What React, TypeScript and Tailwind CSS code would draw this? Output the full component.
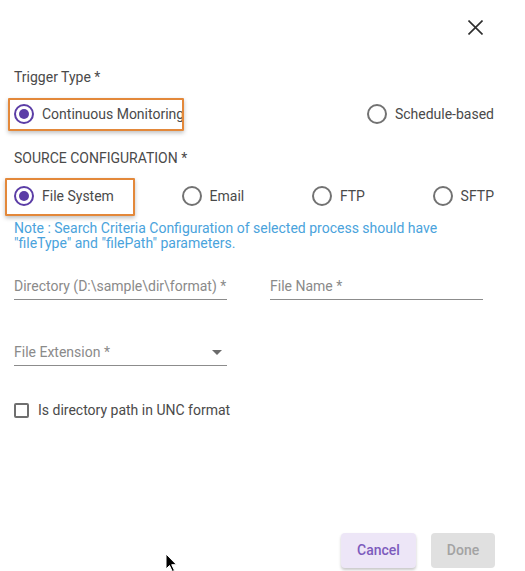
const Radio = ({ label, checked = false }: { label: string; checked?: boolean }) => (
  <label className="flex items-center gap-2 text-[14px] leading-5 text-[#4a4a4a]">
    <span
      className={`flex h-5 w-5 items-center justify-center rounded-full border-2 ${
        checked ? "border-[#5b3da6]" : "border-[#727272]"
      }`}
    >
      {checked && <span className="h-[10px] w-[10px] rounded-full bg-[#5b3da6]" />}
    </span>
    <span className="whitespace-nowrap">{label}</span>
  </label>
);

// orange annotation frame drawn on top of an option
const Highlight = ({ className }: { className: string }) => (
  <span
    className={`pointer-events-none absolute rounded-[1px] border-[2.5px] border-[#e3883a] shadow-[0_2px_4px_rgba(0,0,0,0.25)] ${className}`}
  />
);

const Field = ({ label, select = false }: { label: string; select?: boolean }) => (
  <div className="flex w-[213px] items-center justify-between border-b border-[#8c8c8c] pb-[3px]">
    <span className="text-[14px] leading-5 text-[#8a8a8a] whitespace-nowrap">{label}</span>
    {select && (
      <svg width="10" height="5" viewBox="0 0 10 5" className="mr-[5px]">
        <path d="M0 0h10L5 5z" fill="#6b6b6b" />
      </svg>
    )}
  </div>
);

export default function App() {
  return (
    <div className="relative flex h-[571px] w-[525px] flex-col overflow-hidden bg-white font-['Roboto',sans-serif]">
      <div className="flex justify-end pr-[42px] pt-[20px]">
        <svg width="15" height="15" viewBox="0 0 15 15">
          <path d="M0.5 0.5l14 14M14.5 0.5l-14 14" stroke="#2e2e2e" strokeWidth="1.6" />
        </svg>
      </div>

      <div className="mt-[32px] px-[14px] text-[14px] leading-5 text-[#4a4a4a]">Trigger Type *</div>

      <div className="relative mt-[11px] flex h-[32px] items-center justify-between pl-[14px] pr-[31px]">
        <Radio label="Continuous Monitoring" checked />
        <Radio label="Schedule-based" />
        <Highlight className="left-[8px] top-0 h-[33px] w-[176px]" />
      </div>

      <div className="mt-[18px] px-[14px] text-[14px] leading-5 text-[#4a4a4a]">SOURCE CONFIGURATION *</div>

      <div className="relative mt-[10px] flex h-[35px] items-center justify-between pl-[14px] pr-[31px]">
        <Radio label="File System" checked />
        <Radio label="Email" />
        <Radio label="FTP" />
        <Radio label="SFTP" />
        <Highlight className="left-[5px] top-0 h-[38px] w-[130px]" />
      </div>

      <p className="mt-[8px] px-[14px] text-[14px] leading-[15px] text-[#4aa3dc]">
        Note : Search Criteria Configuration of selected process should have
        <br />
        "fileType" and "filePath" parameters.
      </p>

      <div className="mt-[25px] flex gap-[43px] px-[14px]">
        <Field label="Directory (D:\sample\dir\format) *" />
        <Field label="File Name *" />
      </div>

      <div className="mt-[42px] px-[14px]">
        <Field label="File Extension *" select />
      </div>

      <label className="mt-[34px] flex items-center gap-[9px] px-[14px] text-[14px] leading-5 text-[#4a4a4a]">
        <span className="h-[15px] w-[15px] rounded-[2px] border-2 border-[#6f6f6f]" />
        Is directory path in UNC format
      </label>

      <div className="mt-auto mb-[3px] flex justify-end gap-[15px] pr-[30px]">
        <button className="h-[35px] w-[75px] rounded-[4px] bg-[#ede6f7] text-[14px] font-medium text-[#7d5bbd] shadow-[0_2px_3px_rgba(0,0,0,0.22)]">
          Cancel
        </button>
        <button className="h-[35px] w-[64px] rounded-[4px] bg-[#e0e0e0] text-[14px] font-medium text-[#a3a3a3]">
          Done
        </button>
      </div>

      <svg width="13" height="20" viewBox="0 0 13 20" className="absolute left-[165px] top-[553px]">
        <path d="M1 1v15l3.5-3.5 2.8 6 2.2-1-2.8-5.8H11.5z" fill="#000" stroke="#fff" strokeWidth="1" />
      </svg>
    </div>
  );
}
